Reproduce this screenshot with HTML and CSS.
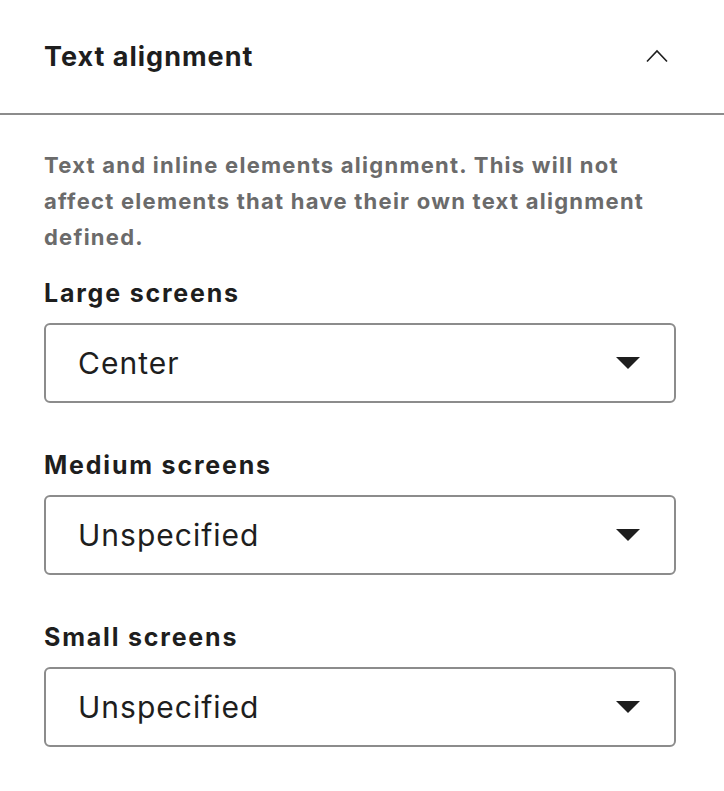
FILE: index.html
```html
<!DOCTYPE html>
<html>
  <head>
    <meta charset="UTF-8">
    <title>Text alignment</title>
    <link rel="stylesheet" href="styles.css">
  </head>
  <body>
    <section class="panel">
      <header class="panel-header">
        <h2 class="panel-title">Text alignment</h2>
        <svg class="chevron" width="22" height="14" viewBox="0 0 22 14">
          <path d="M1 12.5 L11 2 L21 12.5" fill="none" stroke="#1e1e1e" stroke-width="1.6"/>
        </svg>
      </header>
      <div class="panel-body">
        <p class="desc">Text and inline elements alignment. This will not affect elements that have their own text alignment defined.</p>

        <div class="field">
          <label class="field-label">Large screens</label>
          <div class="select">
            <span class="select-value">Center</span>
            <span class="caret"></span>
          </div>
        </div>

        <div class="field">
          <label class="field-label">Medium screens</label>
          <div class="select">
            <span class="select-value">Unspecified</span>
            <span class="caret"></span>
          </div>
        </div>

        <div class="field">
          <label class="field-label">Small screens</label>
          <div class="select">
            <span class="select-value">Unspecified</span>
            <span class="caret"></span>
          </div>
        </div>
      </div>
    </section>
  </body>
</html>
```

FILE: styles.css
```css
*{
  box-sizing: border-box;
}
html, body{
  margin: 0;
  padding: 0;
  background: #fff;
  font-family: 'Inter', 'Liberation Sans', sans-serif;
  color: #1e1e1e;
}
.panel-header{
  display: flex;
  align-items: center;
  justify-content: space-between;
  height: 115px;
  padding: 0 56px 0 44px;
  border-bottom: 2px solid #8c8c8c;
}
.panel-title{
  margin: 0;
  font-size: 27px;
  font-weight: 700;
  letter-spacing: 1px;
}
.chevron{
  display: block;
  margin-bottom: 2px;
}
.panel-body{
  padding: 32px 48px 0 44px;
}
.desc{
  margin: 0 0 20px;
  font-size: 22px;
  line-height: 36px;
  font-weight: 700;
  color: #6b6b6b;
  letter-spacing: 1.25px;
}
.field{
  display: flex;
  flex-flow: column;
  gap: 12px;
  margin-bottom: 44px;
}
.field-label{
  font-size: 25px;
  line-height: 36px;
  font-weight: 700;
  letter-spacing: 1.8px;
}
.select{
  display: flex;
  align-items: center;
  justify-content: space-between;
  height: 80px;
  padding: 0 34px 0 32px;
  border: 2px solid #8c8c8c;
  border-radius: 6px;
}
.select-value{
  font-size: 30px;
  font-weight: 400;
  letter-spacing: 1px;
}
.caret{
  width: 0;
  height: 0;
  border-left: 12px solid transparent;
  border-right: 12px solid transparent;
  border-top: 12px solid #1e1e1e;
}
```
